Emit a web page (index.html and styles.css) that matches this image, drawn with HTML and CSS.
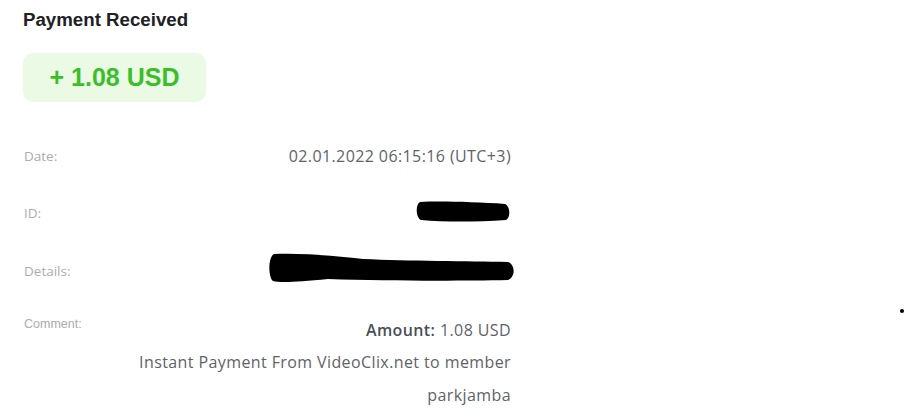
FILE: index.html
```html
<!DOCTYPE html>
<html>
<head>
<meta charset="utf-8">
<link rel="stylesheet" href="styles.css">
</head>
<body>
<div class="page">
  <h1 class="title">Payment Received</h1>
  <div class="badge">+ 1.08 USD</div>
  <div class="rows">
    <div class="row">
      <div class="label">Date:</div>
      <div class="value">02.01.2022 06:15:16 (UTC+3)</div>
    </div>
    <div class="row">
      <div class="label">ID:</div>
      <div class="value">
        <svg class="scribble id-scribble" width="96" height="22" viewBox="0 0 96 22">
          <path d="M5 1 C25 0, 60 1, 90 3 C95 5, 96 16, 91 19 C60 21, 30 21, 6 19 C1 17, 0 4, 5 1 Z" fill="#000"/>
        </svg>
      </div>
    </div>
    <div class="row">
      <div class="label">Details:</div>
      <div class="value">
        <svg class="scribble det-scribble" width="248" height="30" viewBox="0 0 248 30">
          <path d="M6 1 C30 0, 60 2, 95 6 C140 8, 200 8, 240 9 C247 11, 248 24, 240 27 C190 28, 120 28, 60 26 C30 29, 12 30, 5 28 C0 24, 0 4, 6 1 Z" fill="#000"/>
        </svg>
      </div>
    </div>
    <div class="row row-comment">
      <div class="label label-comment">Comment:</div>
      <div class="value value-comment"><b>Amount:</b> 1.08 USD<br>Instant Payment From VideoClix.net to member parkjamba</div>
    </div>
  </div>
  <span class="dot"></span>
</div>
</body>
</html>
```
FILE: styles.css
```css
html, body {
  margin: 0;
  padding: 0;
  background: #fff;
}
.page {
  position: relative;
  width: 905px;
  height: 415px;
  overflow: hidden;
  padding: 9px 0 0 23px;
  box-sizing: border-box;
  font-family: "Liberation Sans", Arial, sans-serif;
}
.title {
  margin: 0;
  font-size: 18.7px;
  line-height: 22px;
  font-weight: bold;
  color: #202124;
}
.badge {
  margin: 22px 0 0 0;
  width: 183px;
  height: 49px;
  box-sizing: border-box;
  border-radius: 10px;
  background: #eafae5;
  color: #3cbe2b;
  font-size: 25px;
  font-weight: bold;
  display: flex;
  align-items: center;
  justify-content: center;
}
.rows {
  margin-top: 25px;
  margin-left: 1px;
  width: 487px;
}
.row {
  display: flex;
  justify-content: space-between;
  align-items: center;
  height: 57.5px;
}
.label {
  font-family: "Open Sans", "Liberation Sans", sans-serif;
  font-size: 13.5px;
  color: #acacac;
}
.value {
  font-family: "Open Sans", sans-serif;
  font-size: 16px;
  letter-spacing: 0.4px;
  color: #5f6368;
  text-align: right;
  display: flex;
  justify-content: flex-end;
}
.scribble { display: block; }
.id-scribble { margin-top: -2px; }
.det-scribble { margin-right: -5px; margin-top: -6px; }
.row-comment {
  align-items: flex-start;
  height: auto;
}
.label-comment {
  font-family: "Liberation Sans", Arial, sans-serif;
  font-size: 12.5px;
  padding-top: 17px;
}
.value-comment {
  display: block;
  width: 390px;
  padding-top: 14px;
  line-height: 32.5px;
}
.value-comment b {
  color: #4a4f55;
  font-weight: 600;
}
.dot {
  position: absolute;
  left: 900px;
  top: 309px;
  width: 4px;
  height: 4px;
  border-radius: 50%;
  background: #000;
}
```
